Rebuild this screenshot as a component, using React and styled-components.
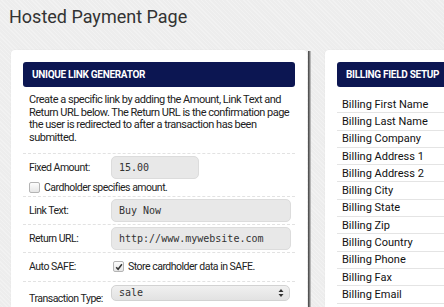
import React from "react";
import styled, { createGlobalStyle } from "styled-components";

const GlobalStyle = createGlobalStyle`
html, body {
  margin: 0;
  padding: 0;
  overflow: hidden;
}
body {
  background-color: #ededed;
  background-image: repeating-linear-gradient(45deg, rgba(255,255,255,0.25) 0 1px, transparent 1px 3px);
  font-family: Roboto, "Liberation Sans", sans-serif;
  color: #222;
}
`;

const Page = styled.div`
padding: 6px 0 0 9px;
width: 600px;
`;

const Title = styled.h1`
margin: 0;
font-size: 18px;
font-weight: 400;
line-height: 22px;
color: #333;
`;

const Columns = styled.div`
display: flex;
align-items: flex-start;
margin-top: 22px;
`;

const Panel = styled.div`
background: #fff;
border-radius: 4px;
padding: 12px;
box-sizing: border-box;
width: ${(p) => p.$width}px;
margin-left: ${(p) => p.$offset || 0}px;
height: 280px;
box-shadow: 0 0 2px rgba(0,0,0,0.06);
`;

const Edge = styled.div`
width: 3px;
height: 260px;
margin: 1px 0 0 1px;
background: linear-gradient(to right, #3c3c3c, #8a8a8a 60%, #d6d6d6);
`;

const Header = styled.div`
height: 25px;
border-radius: 3px;
background: #0c1652;
color: #fff;
font-size: 10px;
font-weight: 700;
letter-spacing: -0.3px;
display: flex;
align-items: center;
padding-left: 9px;
`;

const Desc = styled.p`
margin: 7px 0 8px;
padding: 0 0 0 6px;
font-size: 11px;
line-height: 12.7px;
letter-spacing: -0.5px;
color: #222;
`;

const Divider = styled.div`
border-top: 1px dashed #e2e2e2;
`;

const Row = styled.div`
display: flex;
align-items: ${(p) => p.$align || "center"};
padding: 2px 0 ${(p) => p.$bottom ?? 2}px;
border-bottom: ${(p) => (p.$plain ? "none" : "1px dashed #e2e2e2")};
min-height: ${(p) => p.$min || 0}px;
box-sizing: border-box;
`;

const Block = styled.div`
padding: 2px 0 1px;
border-bottom: 1px dashed #e2e2e2;
`;

const Label = styled.div`
width: 82px;
padding-left: 6px;
font-size: 10.5px;
letter-spacing: -0.5px;
white-space: nowrap;
color: #222;
flex-shrink: 0;
padding-top: ${(p) => p.$top || 0}px;
`;

const Input = styled.div`
box-sizing: border-box;
width: ${(p) => p.$width || 180}px;
height: 23px;
border-radius: 5px;
background: #e8e8e8;
border: 1px solid #dcdcdc;
padding-left: 7px;
display: flex;
align-items: center;
font-family: "DejaVu Sans Mono", monospace;
font-size: 10px;
color: #333;
`;

const CheckLine = styled.label`
display: flex;
align-items: center;
gap: 4px;
height: 14px;
margin-top: ${(p) => p.$gap ?? 2}px;
padding-left: ${(p) => p.$indent || 0}px;
font-size: 10.5px;
letter-spacing: -0.5px;
white-space: nowrap;
color: #222;
`;

const Box = styled.span`
box-sizing: border-box;
width: 11px;
height: 11px;
border: 1px solid #b4b4b4;
border-radius: 2px;
background: linear-gradient(#fdfdfd, #e6e6e6);
display: flex;
align-items: center;
justify-content: center;
`;

const Select = styled.div`
box-sizing: border-box;
width: 179px;
height: 16px;
margin-top: 1px;
border-radius: 5px;
background: linear-gradient(#f0f0f0, #e2e2e2);
border: 1px solid #d2d2d2;
padding: 0 5px 0 7px;
display: flex;
align-items: center;
justify-content: space-between;
font-family: "DejaVu Sans Mono", monospace;
font-size: 10px;
color: #333;
`;

const List = styled.div`
margin-top: 9px;
`;

const ListRow = styled.div`
box-sizing: border-box;
height: 17.3px;
display: flex;
align-items: center;
padding-left: 5px;
border-bottom: 1px solid #e4e4e4;
font-size: 11px;
color: #111;
`;

function Check({ checked }) {
  return (
    <Box>
      {checked && (
        <svg width="8" height="8" viewBox="0 0 8 8">
          <path d="M1.2 4.2 L3.1 6.3 L6.9 1.3" fill="none" stroke="#333" strokeWidth="1.5" />
        </svg>
      )}
    </Box>
  );
}

const fields = [
  "Billing First Name",
  "Billing Last Name",
  "Billing Company",
  "Billing Address 1",
  "Billing Address 2",
  "Billing City",
  "Billing State",
  "Billing Zip",
  "Billing Country",
  "Billing Phone",
  "Billing Fax",
  "Billing Email",
];

export default function App() {
  return (
    <>
      <GlobalStyle />
      <Page>
        <Title>Hosted Payment Page</Title>
        <Columns>
          <Panel $width={296} $offset={2}>
            <Header>UNIQUE LINK GENERATOR</Header>
            <Desc>
              Create a specific link by adding the Amount, Link Text and Return URL below. The Return URL is the
              confirmation page the user is redirected to after a transaction has been submitted.
            </Desc>
            <Divider />
            <Block>
              <Row $plain $bottom={0} style={{ paddingTop: 0 }}>
                <Label>Fixed Amount:</Label>
                <Input $width={88}>15.00</Input>
              </Row>
              <CheckLine $indent={6}>
                <Check />
                Cardholder specifies amount.
              </CheckLine>
            </Block>
            <Row>
              <Label>Link Text:</Label>
              <Input>Buy Now</Input>
            </Row>
            <Row>
              <Label>Return URL:</Label>
              <Input>http://www.mywebsite.com</Input>
            </Row>
            <Row $min={29}>
              <Label>Auto SAFE:</Label>
              <CheckLine $gap={0} $indent={2}>
                <Check checked />
                Store cardholder data in SAFE.
              </CheckLine>
            </Row>
            <Row $align="flex-start" $bottom={3}>
              <Label $top={8}>Transaction Type:</Label>
              <Select>
                sale
                <svg width="6" height="10" viewBox="0 0 6 10">
                  <path d="M3 1 L5.5 4 L0.5 4 Z M3 9 L5.5 6 L0.5 6 Z" fill="#333" />
                </svg>
              </Select>
            </Row>
            <Row>
              <Label />
              <Input />
            </Row>
          </Panel>
          <Edge />
          <Panel $width={240} $offset={14}>
            <Header>BILLING FIELD SETUP</Header>
            <List>
              {fields.map((f) => (
                <ListRow key={f}>{f}</ListRow>
              ))}
            </List>
          </Panel>
        </Columns>
      </Page>
    </>
  );
}
